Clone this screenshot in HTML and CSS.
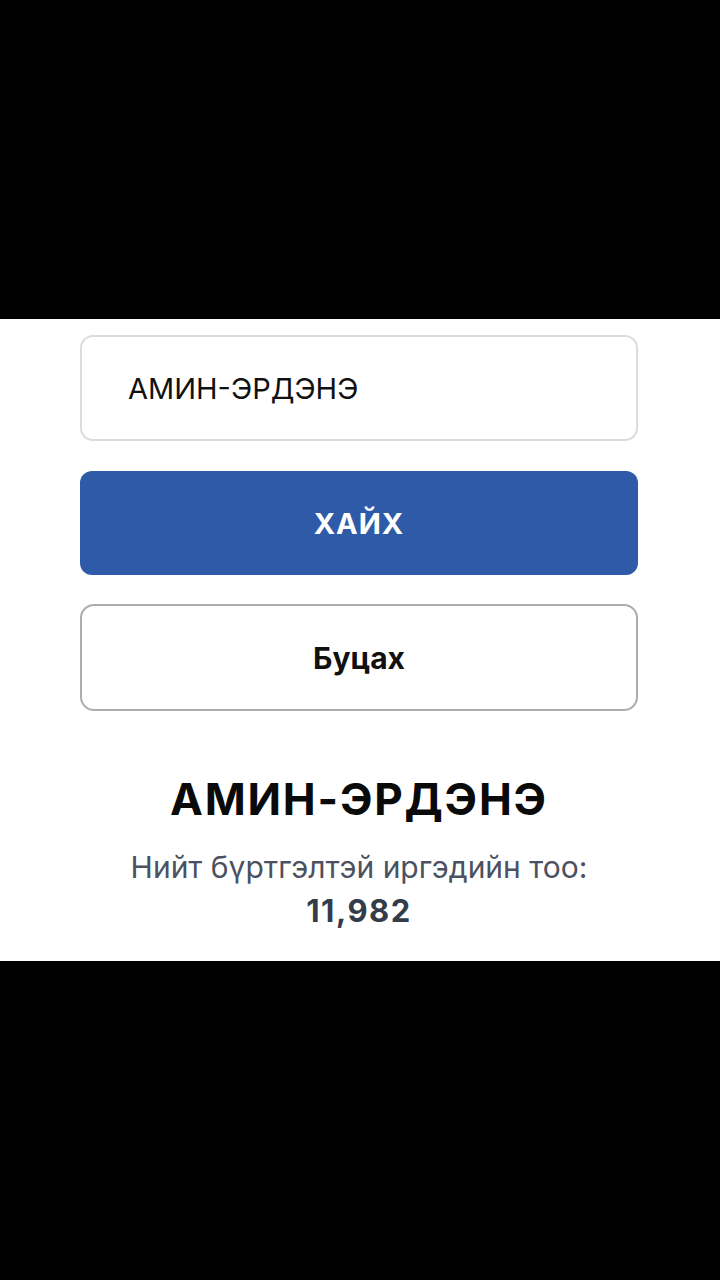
FILE: index.html
```html
<!DOCTYPE html>
<html lang="mn">
<head>
<meta charset="utf-8">
<link rel="stylesheet" href="styles.css">
</head>
<body>
<div class="screen">
  <div class="top-black"></div>
  <main class="panel">
    <div class="field">АМИН-ЭРДЭНЭ</div>
    <button class="btn btn-primary">ХАЙХ</button>
    <button class="btn btn-outline">Буцах</button>
    <section class="result">
      <h1 class="name">АМИН-ЭРДЭНЭ</h1>
      <p class="label">Нийт бүртгэлтэй иргэдийн тоо:</p>
      <p class="count">11,982</p>
    </section>
  </main>
  <div class="bottom-black"></div>
</div>
</body>
</html>
```

FILE: styles.css
```css
html, body {
  margin: 0;
  padding: 0;
  background: #000;
}
body {
  font-family: Inter, "Noto Sans", "Liberation Sans", sans-serif;
}
.screen {
  width: 720px;
  height: 1280px;
  display: flex;
  flex-direction: column;
}
.top-black {
  height: 319px;
  background: #000;
}
.bottom-black {
  flex: 1;
  background: #000;
}
.panel {
  height: 642px;
  background: #fff;
  box-sizing: border-box;
  padding: 16px 82px 0 80px;
  display: flex;
  flex-direction: column;
}
.field {
  box-sizing: border-box;
  height: 106px;
  border: 2px solid #dcdcdc;
  border-radius: 13px;
  padding-left: 46px;
  display: flex;
  align-items: center;
  font-size: 29px;
  color: #111;
}
.btn {
  box-sizing: border-box;
  width: 100%;
  font-family: Inter, "Noto Sans", "Liberation Sans", sans-serif;
  font-weight: 700;
  display: flex;
  align-items: center;
  justify-content: center;
  padding: 0;
}
.btn-primary {
  margin-top: 30px;
  height: 104px;
  background: #2e5aa8;
  border: none;
  border-radius: 12px;
  color: #fff;
  font-size: 29px;
  letter-spacing: 1px;
}
.btn-outline {
  margin-top: 29px;
  height: 107px;
  background: #fff;
  border: 2px solid #adadad;
  border-radius: 14px;
  color: #111;
  font-size: 30px;
}
.result {
  text-align: center;
  margin-top: 60px;
}
.name {
  margin: 0;
  font-size: 44px;
  font-weight: 700;
  letter-spacing: 1.8px;
  color: #0a0a0a;
  line-height: 56px;
}
.label {
  margin: 20px 0 0;
  font-size: 30px;
  color: #4b5160;
  line-height: 40px;
}
.count {
  margin: 4px 0 0;
  font-size: 31px;
  font-weight: 700;
  color: #343c4a;
  letter-spacing: 1.5px;
  line-height: 40px;
}
```
